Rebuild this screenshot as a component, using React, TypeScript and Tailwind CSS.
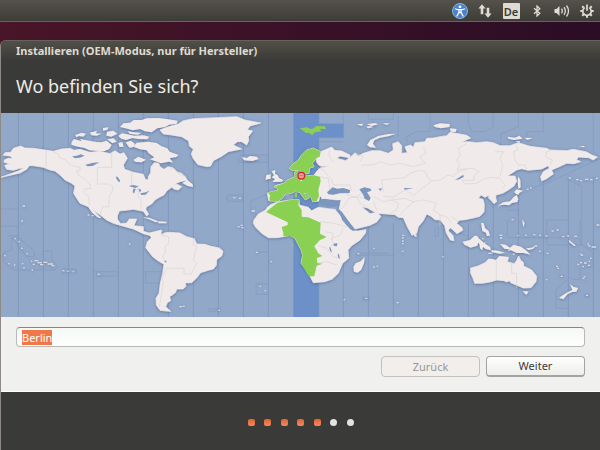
import React, { useEffect, useRef } from "react";

const land = "#f0ebea";

const zoneX = [55, 130, 205, 280, 355, 430, 505, 580, 655, 730, 805, 1030, 1105, 1180, 1255, 1330, 1405, 1480, 1555, 1630, 1705, 1780];

const zoneOutlines = [
  "M0,297H55M3,349H55V377H22M35,377V420L10,428V455L40,480H165L173,468L155,450V424H130V442",
  "M38,385H60L103,425V440H80L38,385M186,477H229V488H186M280,485H355V498H290V485M430,485H487V520H437V485",
  "M715,142V157H805V135H722M682,255H730V274H682V255M752,300V274L805,250M768,426H805M805,521H768V553H805M625,596H660V603H625V596",
  "M957,95H1030M1030,9V41M1105,9V28H1180V9M1195,80V20M1220,95V80L1250,65H1290V9M1405,9V40L1415,65H1455L1480,50V9M1502,140V72L1555,50V9M1580,80V65H1630V9",
  "M1780,9V125L1800,140M1580,240L1640,220L1705,190L1800,145M1700,205L1745,230V405H1640V330H1705M1520,300H1555M1480,240V300",
  "M1305,350V380L1315,378V350M1372,365L1405,380V350M1522,330V383H1700M1740,330V400L1780,430V470L1740,475V510L1705,505L1668,540V595H1705V620M1165,430H1070V436H1180M1680,495H1691V503H1680V495M1755,553H1768V561H1755V553M1088,562H1108V569H1088V562",
];

const continents = [
  "M3,202L30,192L55,183L72,174L60,175L40,181L20,178L14,166L30,162L12,157L13,150L24,145L38,145L30,138L10,136L15,128L32,127L40,115L62,108L75,114L100,115L135,120L160,124L185,117L210,115L222,121L240,118L270,127L300,124L330,131L345,122L360,132L372,128L382,145L370,165L374,178L400,187L430,193L436,208L444,210L445,200L452,188L453,170L463,158L476,160L480,170L492,178L504,170L518,173L530,185L545,190L558,203L562,211L540,215L520,224L532,223L545,230L535,240L524,238L515,232L500,243L492,255L478,262L465,270L455,282L440,290L437,298L446,313L440,318L430,304L400,298L385,300L358,303L352,318L353,329L362,341L380,339L388,327L410,327L402,347L430,350L430,364L447,369L458,367L448,376L430,371L400,357L365,347L340,340L320,330L302,316L285,304L275,295L292,314L303,323L294,322L277,308L265,290L240,280L228,262L221,250L225,228L215,220L195,210L180,195L165,183L150,180L130,172L100,167L88,167L80,178L60,189Z",
  "M447,372L460,366L484,360L488,370L505,367L540,369L560,380L583,386L590,402L615,403L630,408L658,414L669,424L665,438L650,449L649,466L640,477L625,481L602,488L590,504L575,518L555,519L558,529L549,537L530,537L527,547L517,555L509,560L512,572L502,578L497,590L512,604L498,603L480,601L469,585L468,565L477,550L481,520L488,490L492,463L475,453L458,440L437,413L442,395L454,383Z",
  "M480,60L500,52L535,42L550,32L580,26L650,23L710,20L735,30L782,39L750,48L742,59L758,63L745,80L746,92L740,105L725,95L712,95L700,105L725,117L685,125L663,140L640,152L632,168L622,170L594,164L580,146L574,132L580,118L568,108L566,93L545,80L515,75L490,72Z",
  "M762,330L775,312L797,300L802,292L812,284L832,276L870,270L897,269L898,285L925,292L935,302L955,292L985,296L1015,299L1025,330L1040,348L1058,363L1075,363L1098,359L1096,370L1080,390L1055,407L1044,420L1046,445L1028,460L1020,478L1015,490L997,507L975,515L940,518L930,499L919,481L903,459L908,436L904,422L895,404L885,385L870,376L850,380L830,383L805,383L785,370L767,352L760,340Z",
  "M868,175L880,160L893,152L905,135L920,120L940,114L962,125L995,111L1004,121L1025,123L1050,135L1049,143L1020,138L1010,145L1037,152L1055,138L1065,128L1075,138L1090,130L1115,122L1140,122L1165,130L1180,120L1178,101L1195,95L1205,107L1205,130L1222,128L1215,110L1232,105L1240,112L1245,98L1275,95L1280,85L1300,84L1320,80L1340,77L1350,67L1375,71L1400,76L1412,84L1385,96L1405,95L1430,98L1460,95L1480,98L1500,107L1530,107L1555,98L1590,109L1640,115L1650,120L1700,122L1720,118L1760,126L1777,136L1792,141L1780,150L1766,143L1735,141L1730,149L1742,155L1722,161L1700,160L1678,170L1655,180L1660,192L1640,206L1625,213L1622,200L1630,185L1648,175L1645,167L1625,177L1585,181L1565,176L1550,180L1538,188L1522,198L1545,198L1550,213L1542,228L1525,240L1508,250L1488,255L1487,262L1490,275L1482,281L1472,270L1465,263L1468,255L1455,262L1443,255L1435,265L1449,268L1453,283L1452,305L1440,319L1420,324L1395,329L1378,331L1370,340L1387,354L1388,361L1371,371L1358,359L1350,353L1345,362L1359,377L1362,392L1351,390L1339,369L1334,347L1321,330L1305,329L1293,319L1280,312L1270,332L1255,350L1250,370L1236,376L1222,350L1210,323L1195,322L1185,314L1160,312L1130,310L1103,294L1085,290L1110,311L1130,307L1143,319L1130,336L1110,346L1065,357L1048,335L1032,315L1018,298L1020,272L995,268L965,266L963,258L958,262L957,273L938,275L934,263L920,250L911,248L928,263L916,270L905,255L898,247L885,245L870,251L855,252L848,264L835,274L806,272L802,249L820,244L834,241L830,233L822,230L830,226L852,220L863,210L885,200L884,186L892,180L896,195L915,198L942,196L950,184L961,174L990,169L965,169L956,165L949,155L950,144L937,160L942,170L928,175L927,190L907,192L897,180L878,182Z",
  "M1412,474L1434,468L1455,458L1466,447L1477,448L1488,451L1498,439L1526,442L1522,455L1543,461L1550,451L1556,438L1563,452L1570,457L1571,468L1595,480L1610,499L1608,515L1593,533L1570,534L1549,525L1532,518L1529,512L1520,516L1512,512L1490,510L1470,516L1446,520L1424,520L1419,505L1412,489Z",
];

const islands = [
  "M215,96L222,87L245,94L240,87L260,91L276,94L290,96L304,97L320,92L335,105L328,117L312,124L285,122L268,121L252,113L242,112L228,109L214,104Z",
  "M226,75L245,68L258,71L250,80L237,78L229,82Z", "M269,68L292,62L287,70L304,71L290,77L275,76Z",
  "M309,54L326,52L321,60L309,62ZM321,65L340,62L352,71L334,80L319,77ZM321,88L341,85L350,95L337,100Z",
  "M360,51L370,40L390,38L402,30L425,30L440,25L475,24L505,28L533,32L530,41L508,44L495,51L472,55L455,67L435,64L420,57L398,61L382,56Z",
  "M355,78L366,70L382,73L402,77L430,76L448,80L442,88L415,87L397,84L378,90L364,86ZM382,64L403,67L423,69L413,74L391,72Z",
  "M377,97L393,92L405,102L399,112L388,113ZM355,99L367,96L371,110L358,111Z",
  "M400,110L420,118L440,121L446,130L463,142L450,148L483,160L507,155L520,158L509,145L529,141L536,135L509,125L502,115L485,109L470,99L445,95L410,98Z",
  "M400,150L415,140L438,149L425,157L407,156Z", "M547,219L562,210L578,223L579,231L563,228Z",
  "M726,141L740,144L750,138L770,140L776,147L757,153L732,151Z",
  "M815,184L826,180L825,191L833,196L838,205L850,210L845,215L817,216L825,207L815,202L822,196ZM799,195L812,193L812,206L796,209Z",
  "M1101,105L1111,90L1135,78L1165,72L1188,71L1165,79L1140,83L1123,91L1119,101L1128,113L1110,112Z",
  "M1070,43L1090,41L1085,48ZM1100,43L1124,39L1135,43L1115,48ZM1148,40L1169,40L1160,45ZM1098,50L1110,48L1120,51L1105,55Z",
  "M1300,46L1320,40L1350,42L1348,51L1322,55L1305,51ZM1350,55L1370,57L1367,66L1352,65Z",
  "M1523,80L1545,83L1558,77L1568,86L1543,90L1525,86ZM1574,83L1598,84L1582,90ZM1546,94L1560,93L1558,98ZM1736,108L1755,108L1751,112Z",
  "M1554,199L1561,210L1562,232L1555,237L1553,217Z", "M1543,245L1550,238L1569,242L1558,249L1555,255L1545,250Z",
  "M1550,255L1555,267L1552,276L1536,279L1527,286L1513,284L1499,286L1494,293L1497,285L1510,277L1530,274L1542,260Z",
  "M1420,382L1438,386L1453,400L1470,410L1473,421L1457,417L1438,402Z", "M1472,420L1493,422L1515,428L1500,431L1477,427Z",
  "M1388,395L1410,390L1424,377L1432,378L1437,387L1432,407L1412,413L1393,404Z",
  "M1438,398L1442,402L1460,396L1448,404L1458,414L1449,411L1447,421L1440,415Z",
  "M1443,338L1451,340L1455,354L1466,363L1470,377L1460,378L1458,368L1447,363L1445,351Z",
  "M1500,402L1517,404L1530,413L1541,404L1563,410L1578,421L1592,434L1570,429L1550,429L1526,418L1513,416Z",
  "M1578,415L1595,413L1606,407L1600,416L1585,420Z", "M1568,544L1586,544L1579,555Z",
  "M1710,522L1720,530L1734,534L1729,545L1717,546L1703,552L1690,568L1677,563L1700,548L1717,540Z",
  "M1094,441L1092,460L1084,479L1073,488L1062,485L1060,471L1067,460L1082,454Z",
  "M1242,371L1250,374L1249,381L1243,379Z", "M427,322L447,323L475,334L468,337L445,327ZM475,334L500,335L499,340L475,340Z",
  "M1567,328L1574,340L1570,352L1568,341ZM1706,389L1728,407L1722,408L1708,396ZM1740,430L1750,436L1744,438Z",
];

const dots = "M93,454h4M103,452h12M112,458h14M120,464h10M130,457h12M143,462h16M98,463h6M25,461h4M42,465h4M66,461h4M70,474h4M95,480h4M155,467h8M12,437h5M63,415h5M55,395h4M79,431h4M44,386h4M188,482h5M202,484h4M218,485h4M293,493h6M387,402h4M64,333h5M68,288h7M263,315h5M275,317h6M700,263h6M717,265h6M755,303h10M713,350h6M722,346h6M724,353h6M768,427h6M812,455h4M779,529h4M794,542h4M538,590h8M548,589h6M655,601h5M1072,431h6M1120,415h4M1120,471h4M1130,469h4M1206,424h4M1207,376h6M1206,384h5M1206,393h5M1206,401h5M1327,440h4M1031,569h4M1096,565h6M1190,578h6M1535,329h5M1552,377h4M1575,376h5M1600,374h6M1618,376h5M1637,378h5M1655,363h5M1670,360h6M1687,380h6M1702,378h5M1723,379h8M1765,408h6M1775,411h13M1762,402h4M1740,458h6M1752,459h8M1766,454h4M1764,466h6M1732,463h6M1747,470h5M1770,445h5M1668,469h6M1672,475h5M1748,505h5M1751,500h5M1682,499h6M1638,509h4M1758,556h6M1790,345h8M1706,204h6M1728,209h8M1740,212h6M1755,208h10M1770,209h8M1788,205h6M1580,238h6M1590,234h5M1604,408h8M1617,424h5M1640,430h5M1498,376h10M1500,384h7M1525,421h5M1465,430h12M1446,386h5M1538,433h6M820,188h5";

const borders = [
  "M138,122V170M160,125L175,132L177,142L197,150L207,162L220,168L240,172V182H230L235,195L252,205L270,224L273,236H256L250,246L266,260L268,285M335,130V172H292V222H325L340,230L336,245L328,260L326,290L308,290L300,314M395,185V225L408,240L416,238L414,260L424,268L422,298M507,180L522,174L535,190L558,200",
  "M484,362L484,375L506,380L506,400L495,410L496,430L488,440L495,455M580,387V403L590,408L580,450L590,460L574,492L552,492L552,475H500L486,505L490,520L484,555L478,590",
  "M955,175L970,180L980,192L995,208L1000,225L1050,225L1055,240L1040,252L1060,260L1100,265M988,120V140L1000,155M960,200L985,205L990,240M1150,245L1145,210L1215,203L1230,190L1260,180L1275,185L1285,205L1295,213L1280,225L1260,240L1240,257L1218,240L1200,248L1180,262L1150,258M1270,110L1278,130L1260,140L1275,160L1240,170L1200,160L1170,165L1140,155L1120,165L1085,165M1295,213L1320,210L1345,195L1360,200L1374,185L1400,178M1070,130L1090,140L1080,155",
  "M1400,100L1375,115L1380,135L1370,150L1380,165L1370,180L1395,176L1420,175L1438,185L1420,198L1425,210L1385,212L1395,222L1430,220L1450,208L1475,202L1500,205L1515,225L1508,235M1485,125L1510,125L1500,145L1508,165L1500,200M1548,107L1555,120L1541,125L1545,150L1555,165H1575L1580,177M1655,120L1638,127V142L1658,150L1650,165",
  "M1020,300L1035,285L1045,265L1070,260L1080,280L1100,290M1070,260L1090,245L1110,255M1120,275L1130,300M1120,260L1150,275L1175,270L1195,280L1190,300L1170,310M1175,270L1215,265L1240,275L1220,295L1200,315M1240,275L1270,270L1310,280L1300,300L1320,315L1340,320L1355,340M1320,315V345M1355,320L1375,335",
  "M1489,450V510M1535,458V490H1550V533M960,335L1000,340L1040,350M985,420L1000,400L995,385L1020,375L1030,355M955,407L980,415L1000,440L1020,445M975,365L1000,370L995,390M950,460L980,455L1010,465",
].join("");

function WorldMap() {
  return (
    <svg role="img" aria-label="Zeitzonenkarte" viewBox="3 9 1797 612" className="block w-full bg-[#92a8c9]">
      <defs>
        <filter id="coast" x="-5%" y="-5%" width="110%" height="110%">
          <feDropShadow dx="0" dy="2" stdDeviation="4" floodColor="#46628f" floodOpacity="0.8" />
        </filter>
      </defs>
      <path d="M880,0H957V41H1031V83H957V621H880Z" fill="#6c90c7" />
      <g stroke="#8298bf" strokeWidth="3" fill="none">
        {zoneX.map((x) => (
          <path key={x} d={x < 1030 ? `M${x},9V621` : x < 1480 ? `M${x},340V621` : `M${x},200V621`} />
        ))}
        {zoneOutlines.map((d) => (
          <path key={d} d={d} strokeWidth="2" />
        ))}
        <path d="M957,9V41H1031V83H957V621" strokeWidth="2" />
      </g>
      <g fill={land} filter="url(#coast)">
        <path d={continents.join("")} stroke={land} strokeWidth="2" strokeLinejoin="round" />
        <path d={islands.join("")} />
        <path d={dots} stroke={land} strokeWidth="4" strokeOpacity="0.75" />
      </g>
      <path d={borders} fill="none" stroke="#d8d4d3" strokeWidth="2" />
      <g fill="#7c96be">
        <path d="M981,247L998,232L1012,236L1030,234L1050,240L1049,249L1020,250L1000,254L985,253Z" />
        <path d="M1078,238L1093,232L1112,236L1114,242L1101,247L1112,264L1107,273L1094,266L1089,253Z" />
        <path d="M957,270L975,266L1000,272L1022,270L1018,289L985,292L960,286Z" />
        <path d="M1135,236L1146,235L1142,243ZM1212,234L1240,235L1214,239ZM1364,211L1390,194L1391,201L1378,208Z" />
        <path d="M216,139L230,137L242,133L254,137L240,143L225,145ZM256,164L280,158L298,157L278,168L262,169ZM347,199L354,202L361,213L357,217L350,208ZM386,228L400,225L416,229L406,234ZM400,236H407L402,251L398,246ZM415,235L424,240L420,248ZM421,250L438,247L449,241L437,254L424,255Z" />
        <path d="M1001,401L1012,399L1011,409L1001,408ZM988,410L992,413L996,428L990,422ZM1013,430L1018,435L1019,448L1014,442ZM485,365H490V371H485ZM494,452H499V457H494Z" />
        <path d="M1006,298L1020,315L1038,338L1049,356L1060,362L1063,357L1044,332L1026,306L1014,297Z" />
      </g>
      <g fill="#8ad153">
        <path d="M868,175L880,160L893,152L905,135L920,120L940,114L962,125L959,140L950,144L937,160L942,170L928,175L927,190L907,192L897,180L878,182Z" />
        <path d="M808,272L810,255L803,248L820,244L834,241L830,233L822,230L852,220L863,210L885,200L884,186L892,180L896,195L915,198L942,196L960,200L962,214L955,240L957,258L950,273L938,275L934,263L920,250L911,248L928,263L916,270L905,255L898,247L885,245L870,251L855,252L848,264L835,274Z" />
        <path d="M798,306L832,278L870,270L897,269L895,285L905,300V320L925,322L962,338L960,371L980,381L960,390L943,409L955,430L967,438L950,445L952,459L968,461L950,467L943,499H926L903,459L908,436L904,422L895,404L885,385L870,379H850V369L845,351L863,345V337Z" />
        <path d="M900,55L920,52L935,58L950,48L975,49L978,57L958,56L965,64L945,67L936,76L927,68L918,69ZM884,249H891V262H884ZM855,255H867V258H855ZM875,403H880V407H875Z" />
      </g>
      <path d="M904,204V214" stroke="#d4e5f7" strokeWidth="5" />
      <circle cx="904" cy="197" r="10" fill="#e9a29b" stroke="#d0262b" strokeWidth="4" />
      <path d="M898,197H910" stroke="#d65755" strokeWidth="2" />
    </svg>
  );
}

const trayButton = "flex h-full w-6 items-center justify-center";

function Tray() {
  return (
    <header className="flex h-[22px] items-center justify-end gap-px border-b border-[#66635b] bg-linear-to-b from-[#54524a] to-[#3d3c37] pr-px text-[#dfdbd2]">
      <button aria-label="Barrierefreiheit" className={trayButton}>
        <svg width="16" height="16" viewBox="0 0 16 16">
          <circle cx="8" cy="8" r="7.5" fill="#4c83c6" stroke="#8db4e4" />
          <circle cx="8" cy="3.8" r="1.4" fill="#fff" />
          <path d="M3.5 6L7 7v2.2L5 13M12.5 6L9 7v2.2l2 3.8M7 6.7h2v3H7z" fill="none" stroke="#fff" strokeWidth="1.3" strokeLinecap="round" />
        </svg>
      </button>
      <button aria-label="Netzwerk" className={trayButton}>
        <svg width="14" height="14" viewBox="0 0 14 14" fill="currentColor">
          <path d="M4 .3L7.6 4.6H5.3v5.6H2.7V4.6H.4zM10 13.7L6.4 9.4h2.3V3.8h2.6v5.6h2.3z" />
        </svg>
      </button>
      <button aria-label="Tastaturbelegung" className="flex h-full w-[26px] items-center justify-center">
        <span className="flex h-4 w-[17px] items-center justify-center rounded-[1px] bg-[#dfdbd2] pt-0.5 text-[11px] font-semibold leading-4 text-[#3c3b37]">De</span>
      </button>
      <button aria-label="Bluetooth" className={trayButton}>
        <svg width="8" height="12" viewBox="0 0 8 12" fill="none" stroke="currentColor" strokeWidth="1.3">
          <path d="M1 3.3l5.8 5L4 11V1l2.8 2.7L1 8.7" />
        </svg>
      </button>
      <button aria-label="Lautstärke" className={trayButton}>
        <svg width="16" height="14" viewBox="0 0 16 14" fill="none" stroke="currentColor" strokeWidth="1.3">
          <path d="M.5 5h2L5.5 2v10l-3-3h-2z" fill="currentColor" stroke="none" />
          <path d="M7.5 4.7q1.6 2.3 0 4.6M10 3.2q2.6 3.8 0 7.6M12.5 1.5q4 5.5 0 11" />
        </svg>
      </button>
      <button aria-label="System" className={trayButton}>
        <svg width="14" height="14" viewBox="0 0 14 14" fill="none" stroke="currentColor" strokeWidth="1.7">
          <path d="M4.8 3.6a4.2 4.2 0 1 0 4.4 0M7 .5v6.2" />
          <path d="M2.2 2.2l1.6 1.6M11.8 2.2l-1.6 1.6M.3 7h2.2M11.5 7h2.2M2.2 11.8l1.6-1.6M11.8 11.8l-1.6-1.6M7 11.5v2.3" strokeWidth="2" />
        </svg>
      </button>
    </header>
  );
}

function Progress() {
  return (
    <footer className="flex flex-1 items-center justify-center bg-[#3a3b38] pt-0.5">
      <ol aria-label="Schritt 5 von 7" className="flex w-[106px] justify-between">
        {[1, 2, 3, 4, 5, 6, 7].map((n) => (
          <li key={n} className={n <= 5 ? "size-[7px] rounded-[2px] bg-linear-to-b from-[#e4602c] to-[#f08a62]" : "size-[7px] rounded-full bg-[#e5e3e1]"} />
        ))}
      </ol>
    </footer>
  );
}

export default function App() {
  const city = useRef<HTMLInputElement>(null);

  useEffect(() => {
    city.current?.focus();
    city.current?.select();
  }, []);

  return (
    <div className="flex min-h-screen flex-col bg-linear-to-r from-[#491528] to-[#2b0d25] font-['Noto_Sans','Open_Sans',sans-serif]">
      <Tray />
      <main className="mt-[18px] flex flex-1 flex-col overflow-hidden rounded-tl-md border-l border-[#8f8a88] bg-[#3a3b38] text-[#dfdbd2]">
        <div className="flex h-5 items-center border-t border-[#65635b] bg-linear-to-b from-[#504f48] to-[#3c3b37] px-[15px] text-[11px] leading-4 font-bold">
          Installieren (OEM-Modus, nur für Hersteller)
        </div>
        <h1 className="flex h-[53px] items-center px-[15px] text-[18px] text-[#eeebe6]">Wo befinden Sie sich?</h1>
        <WorldMap />
        <form onSubmit={(e) => e.preventDefault()} className="border-b border-white bg-[#f0f1ef] px-[15px] pt-[10px] pb-[14px] text-[11px] leading-4 text-[#3c3c3c]">
          <input
            ref={city}
            aria-label="Ort"
            defaultValue="Berlin"
            className="block h-5 w-full rounded-[4px] border border-[#b9b9b7] border-t-[#858583] bg-linear-to-b from-[#f6f8f5] to-[#fdfffc] px-[5px] outline-none selection:bg-[#f07746] selection:text-white"
          />
          <div className="mt-[9px] flex justify-end gap-1.5">
            <button type="button" disabled className="h-[21px] w-[99px] rounded-[4px] border border-[#c4c2c0] bg-[#f1eeec] text-[#989694]">
              Zurück
            </button>
            <button type="submit" className="h-[21px] w-[99px] rounded-[4px] border border-b-2 border-[#a3a3a1] bg-linear-to-b from-white to-[#ededeb]">
              Weiter
            </button>
          </div>
        </form>
        <Progress />
      </main>
    </div>
  );
}
